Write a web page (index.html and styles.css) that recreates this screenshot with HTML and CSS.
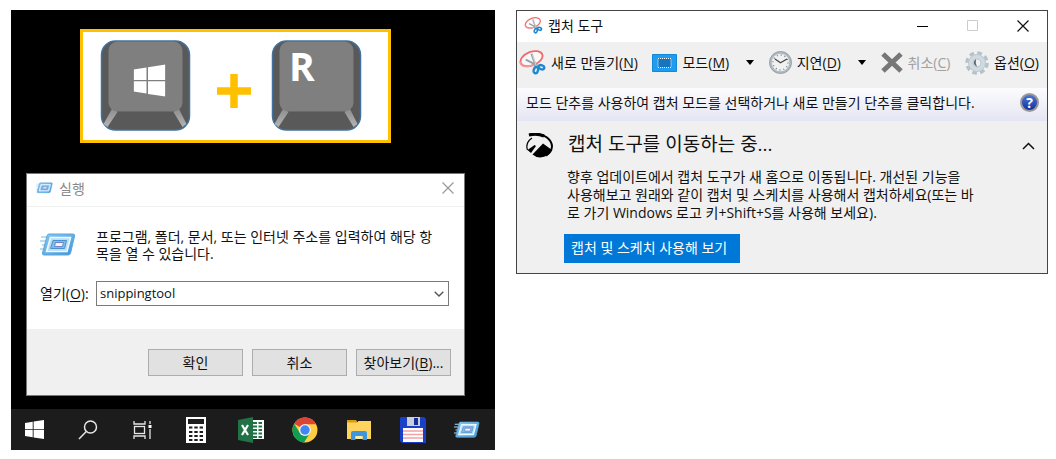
FILE: index.html
```html
<!doctype html>
<html lang="ko">
<head>
  <meta charset="utf-8">
  <meta name="viewport" content="width=device-width,initial-scale=1">
  <title>캡처 도구</title>
  <link rel="stylesheet" href="styles.css">
</head>
<body>
  <svg class="defs" width="0" height="0">
    <defs>
      <linearGradient id="run-blue" x1="0" y1="0" x2="1" y2="1">
        <stop offset="0" stop-color="#8cc8f0"/><stop offset="1" stop-color="#3b97dc"/>
      </linearGradient>
      <linearGradient id="edge" x1="0" y1="0" x2="0" y2="1">
        <stop offset="0" stop-color="#8c8c8c"/><stop offset="1" stop-color="#b4b4b4"/>
      </linearGradient>
      <symbol id="icon-run" viewBox="0 0 36 24">
        <path d="M1 4h8M0 8h8M2 12h6M0 16h6" stroke="#a5d3f2" stroke-width="1.4"/>
        <path d="M9 1h24q2 0 1.600 2l-4 17q-.5 2-2.500 2H4q-2 0-1.500-2L7 3q.5-2 2-2z" fill="url(#run-blue)" stroke="#5aa7dc"/>
        <path d="M10.500 4.500h20L27 18.500H6.500z" fill="#b9def6" stroke="#eef8ff" stroke-width="1.600"/>
        <path d="M13 7.500h13.500L24.500 15.500H10.500z" fill="#7fbcea" stroke="#4b93cf"/>
        <path d="M15.500 9.500h8l-1 4h-8z" fill="#eef3fc" stroke="#6a86c8"/>
      </symbol>
      <symbol id="icon-windows" viewBox="0 0 32 32">
        <path d="M0 5l13-2v12.500H0zM14.500 2.700L32 0v15.500H14.500zM0 16.700h13V29L0 27zM14.500 16.700H32V32l-17.500-2.600z" fill="#fff"/>
      </symbol>
      <symbol id="icon-snip" viewBox="0 0 28 26">
        <ellipse cx="13" cy="9" rx="12" ry="7" transform="rotate(-22 13 9)" fill="#fff" fill-opacity=".5" stroke="#ee6a6c" stroke-width="1.900"/>
        <path d="M1 12q1 6 8 5 5-.5 9-3" fill="none" stroke="#f29a9a" stroke-width="1.800"/>
        <path d="M13 4l5 14M7 10l14 7" stroke="#9aa1a6" stroke-width="2.200"/>
        <path d="M14 5l4 12" stroke="#e3e6e8" stroke-width=".8"/>
        <ellipse cx="17.500" cy="21" rx="2.200" ry="3.300" transform="rotate(15 17.500 21)" fill="none" stroke="#2089ce" stroke-width="2.500"/>
        <ellipse cx="23.300" cy="18" rx="3" ry="2.100" transform="rotate(20 23.300 18)" fill="none" stroke="#2089ce" stroke-width="2.500"/>
      </symbol>
    </defs>
  </svg>

  <main class="page">
    <section class="desktop">
      <div class="shortcut">
        <svg class="key" viewBox="0 0 90 91" role="img" aria-label="Windows">
          <rect x="1" y="1" width="88" height="89" rx="14" fill="#595959" stroke="#41719c" stroke-width="1.500"/>
          <path d="M12 68l5 4L7 87l-4-3zM78 68l-5 4 9 15 4-3z" fill="url(#edge)"/>
          <rect x="8" y="1.500" width="74" height="70" rx="9" fill="#7f7f7f"/>
          <svg x="33" y="24" width="32" height="33"><use href="#icon-windows"/></svg>
        </svg>
        <svg class="plus" viewBox="0 0 34 34" role="img" aria-label="plus">
          <path d="M17 0v34M0 17h34" stroke="#ffc000" stroke-width="7.500"/>
        </svg>
        <div class="key-letter">
          <svg class="key" viewBox="0 0 90 91">
            <rect x="1" y="1" width="88" height="89" rx="14" fill="#595959" stroke="#41719c" stroke-width="1.500"/>
            <path d="M12 68l5 4L7 87l-4-3zM78 68l-5 4 9 15 4-3z" fill="url(#edge)"/>
            <rect x="8" y="1.500" width="74" height="70" rx="9" fill="#7f7f7f"/>
          </svg>
          <span class="letter">R</span>
        </div>
      </div>

      <form class="run">
        <header class="run-title">
          <svg class="run-small"><use href="#icon-run"/></svg>
          <span>실행</span>
          <button type="button" class="icon-button" aria-label="닫기">
            <svg width="12" height="12" viewBox="0 0 12 12"><path d="M.5.5l11 11M11.500.5l-11 11" stroke="#999" stroke-width="1.200"/></svg>
          </button>
        </header>
        <div class="run-body">
          <div class="run-message">
            <svg class="run-large"><use href="#icon-run"/></svg>
            <p>프로그램, 폴더, 문서, 또는 인터넷 주소를 입력하여 해당 항<br>목을 열 수 있습니다.</p>
          </div>
          <div class="run-field">
            <label for="open">열기(<u>O</u>):</label>
            <div class="combo">
              <select id="open"><option>snippingtool</option></select>
              <svg class="combo-arrow" viewBox="0 0 10 6"><path d="M.7.7L5 5 9.300.7" fill="none" stroke="#555" stroke-width="1.400"/></svg>
            </div>
          </div>
        </div>
        <footer class="run-footer">
          <button type="button">확인</button>
          <button type="button">취소</button>
          <button type="button">찾아보기(<u>B</u>)...</button>
        </footer>
      </form>

      <nav class="taskbar">
        <button aria-label="시작"><svg width="19" height="19"><use href="#icon-windows"/></svg></button>
        <button aria-label="검색">
          <svg width="20" height="20" viewBox="0 0 20 20" fill="none" stroke="#e6e6e6" stroke-width="1.500"><circle cx="12.500" cy="7" r="6"/><path d="M8.300 11.500L1 19"/></svg>
        </button>
        <button aria-label="작업 보기">
          <svg width="19" height="18" viewBox="0 0 19 18" fill="none" stroke="#e6e6e6" stroke-width="1.300"><path d="M1 0v3h11V0M1 18v-3h11v3M17 0v3M17 8v10"/><rect x="1.500" y="5.500" width="10" height="7"/><path d="M15.500 4h3v3h-3z" fill="#fff" stroke="none"/></svg>
        </button>
        <button aria-label="계산기">
          <svg width="20" height="26" viewBox="0 0 20 26"><path fill="#fff" d="M0 0h20v26H0z"/><path fill="#1c1c1c" d="M2 2h16v5H2z"/><path d="M3 10.500h14M3 15h14M3 19h14M3 23h14" stroke="#1c1c1c" stroke-width="2.200" stroke-dasharray="3.400 1.900"/></svg>
        </button>
        <button aria-label="Excel">
          <svg width="26" height="26" viewBox="0 0 26 26"><path fill="#fff" d="M13 3h13v19H13z"/><path d="M15 6h4m1.500 0H24M15 9.500h4m1.500 0H24M15 13h4m1.500 0H24M15 16.500h4m1.500 0H24M15 20h4m1.500 0H24" stroke="#217346" stroke-width="2"/><path fill="#217346" d="M0 3l15-3v26L0 23z"/><path d="M4 8l6 10M10 8L4 18" stroke="#fff" stroke-width="2.200"/></svg>
        </button>
        <button aria-label="Chrome">
          <svg width="26" height="26" viewBox="0 0 26 26"><circle cx="13" cy="13" r="12.500" fill="#ffcd40"/><path d="M13 13L2.200 6.700A12.500 12.500 0 0 1 24 7.200H13z" fill="#db4437"/><path d="M2.200 6.700A12.500 12.500 0 0 0 12 25.500l6-9.500-5-3-5 3z" fill="#0f9d58"/><circle cx="13" cy="13" r="6" fill="#f1f1f1"/><circle cx="13" cy="13" r="4.700" fill="#4285f4"/></svg>
        </button>
        <button aria-label="파일 탐색기">
          <svg width="24" height="20" viewBox="0 0 24 20"><path d="M0 0h9l2 3H0z" fill="#dd9a0e"/><path d="M0 2.500h10l1.500-1.500H24v18H0z" fill="#ffd45e"/><path d="M4 20v-7q0-2 2-2h12q2 0 2 2v7h-4.500v-4h-7v4z" fill="#3a96dd"/><path d="M8.500 16h7v3h-7z" fill="#ffe9a8"/></svg>
        </button>
        <button aria-label="저장">
          <svg width="26" height="26" viewBox="0 0 26 26"><path d="M1 0h23l2 2v24H2l-2-2V1z" fill="#1a3fc8"/><path d="M7 0h13v9H7z" fill="#c9ced8"/><path d="M14 1h4v7h-4z" fill="#142f9c"/><path d="M3 11h20v14H3z" fill="#fff"/><path d="M3 14h20M3 17.500h20M3 21h20" stroke="#f2a1a6" stroke-width="1.300"/></svg>
        </button>
        <button aria-label="실행"><svg width="26" height="18"><use href="#icon-run"/></svg></button>
      </nav>
    </section>

    <section class="snip">
      <header class="snip-title">
        <svg width="19" height="17"><use href="#icon-snip"/></svg>
        <h1>캡처 도구</h1>
        <div class="window-buttons">
          <button aria-label="최소화"><svg width="12" height="12"><path d="M0 6.500h11" stroke="#000"/></svg></button>
          <button aria-label="최대화" disabled><svg width="12" height="12"><path d="M.5.5h10v10H.5z" fill="none" stroke="#ccc"/></svg></button>
          <button aria-label="닫기"><svg width="12" height="12"><path d="M.5.5l11 11M11.500.5l-11 11" stroke="#111" stroke-width="1.200"/></svg></button>
        </div>
      </header>

      <div class="toolbar">
        <button>
          <svg width="27" height="25"><use href="#icon-snip"/></svg>
          <span>새로 만들기(<u>N</u>)</span>
        </button>
        <button>
          <svg width="25" height="18" viewBox="0 0 25 18"><path d="M.5.500h24v17H.5z" fill="#1c9df0" stroke="#1687d3"/><path d="M6 4.500h13v9H6z" fill="#1576bf" stroke="#fff" stroke-dasharray="1 1"/></svg>
          <span>모드(<u>M</u>)</span>
          <svg class="caret" width="8" height="5"><path d="M0 0h8L4 5z"/></svg>
        </button>
        <button>
          <svg width="23" height="23" viewBox="0 0 23 23"><circle cx="11.500" cy="11.500" r="10" fill="#f0f1f1" stroke="#b0bac1" stroke-width="2.500"/><circle cx="11.500" cy="11.500" r="11" fill="none" stroke="#8c979e" stroke-width=".7"/><circle cx="11.500" cy="11.500" r="7.500" fill="none" stroke="#777" stroke-width="1.300" stroke-dasharray="1 2.927"/><path d="M6 8l5.500 3.700L18 8" fill="none" stroke="#444" stroke-width="1.300"/></svg>
          <span>지연(<u>D</u>)</span>
          <svg class="caret" width="8" height="5"><path d="M0 0h8L4 5z"/></svg>
        </button>
        <button disabled>
          <svg width="22" height="21" viewBox="0 0 22 21"><path d="M2 2l18 17M20 2L2 19" stroke="#777" stroke-width="5"/></svg>
          <span>취소(<u>C</u>)</span>
        </button>
        <button>
          <svg width="24" height="26" viewBox="0 0 24 26"><circle cx="12" cy="13" r="10" fill="none" stroke="#b5c2ca" stroke-width="3.500" stroke-dasharray="4.600 3.254"/><circle cx="12" cy="13" r="8.500" fill="#d0dae0" stroke="#bcc8cf"/><circle cx="12" cy="13" r="4" fill="#edf1f3" stroke="#bdc8ce"/><path d="M11 9q-5 4 1 8-2-4-1-8z" fill="#59656d"/></svg>
          <span>옵션(<u>O</u>)</span>
        </button>
      </div>

      <div class="hint">
        <p>모드 단추를 사용하여 캡처 모드를 선택하거나 새로 만들기 단추를 클릭합니다.</p>
        <button class="help" aria-label="도움말">?</button>
      </div>

      <article class="notice">
        <svg class="notice-icon" width="27" height="25" viewBox="0 0 27 25">
          <path d="M3 2Q14-1 21 4.500q5 4 5 9-.5 6-6 9" fill="none" stroke="#000" stroke-width="2"/>
          <path d="M3 2q8-2 15 1" fill="none" stroke="#000" stroke-width="3"/>
          <path d="M6 5Q-1 10 1.500 17" fill="none" stroke="#000" stroke-width="1.200"/>
          <path d="M1.500 17l7-5 1.500 1-5 7zM6.500 21.500L17 10.500l9 6.500Q23 24 14 24.500q-4 0-7.500-3z"/>
        </svg>
        <div class="notice-text">
          <h2>캡처 도구를 이동하는 중...</h2>
          <p>향후 업데이트에서 캡처 도구가 새 홈으로 이동됩니다. 개선된 기능을<br>사용해보고 원래와 같이 캡처 및 스케치를 사용해서 캡처하세요(또는 바<br>로 가기 Windows 로고 키+Shift+S를 사용해 보세요).</p>
          <button class="try">캡처 및 스케치 사용해 보기</button>
        </div>
        <button class="icon-button" aria-label="접기">
          <svg width="13" height="8" viewBox="0 0 13 8"><path d="M1 7l5.500-5.500L12 7" fill="none" stroke="#111" stroke-width="1.500"/></svg>
        </button>
      </article>
    </section>
  </main>
</body>
</html>
```
FILE: styles.css
```css
* {
  box-sizing: border-box;
}

body {
  margin: 0;
  background: #fff;
  color: #111;
  font: 14px/17px "Open Sans", "Noto Sans CJK KR", sans-serif;
}

h1, h2, p {
  margin: 0;
  font-weight: normal;
}

svg {
  display: block;
  flex: none;
}

.defs {
  position: absolute;
}

button {
  padding: 0;
  border: 0;
  background: none;
  color: inherit;
  font: inherit;
  white-space: nowrap;
}

u {
  text-underline-offset: 2px;
}

.page {
  display: grid;
  grid-template-columns: 484fr 532fr;
  align-items: start;
  gap: 21px;
  padding: 10px 8px 8px 11px;
}

/* desktop with the run dialog */
.desktop {
  background: #000;
}

.shortcut {
  display: flex;
  justify-content: space-between;
  align-items: center;
  margin: 19px 104px 30px 69px;
  padding: 8px 26px 9px 17px;
  border: 3px solid #ffc000;
  background: #fff;
}

.key {
  width: 91px;
  height: 91px;
}

.plus {
  width: 34px;
  height: 34px;
  margin: 10px 0 0 6px;
}

.key-letter {
  position: relative;
}

.letter {
  position: absolute;
  top: 6px;
  left: 18px;
  color: #fff;
  font-size: 39px;
  line-height: 40px;
  font-weight: bold;
}

.run {
  margin: 0 30px 0 15px;
  border: 1px solid #777;
  background: #fff;
}

.run-title {
  display: flex;
  align-items: center;
  gap: 6px;
  height: 33px;
  padding: 0 10px 4px 9px;
  border-bottom: 1px solid #f0f0f0;
  color: #888;
}

.run-small {
  width: 17px;
  height: 12px;
}

.icon-button {
  margin-left: auto;
}

.run-body {
  padding: 21px 15px 23px 13px;
}

.run-message {
  display: flex;
  align-items: center;
  gap: 20px;
  margin-bottom: 19px;
  white-space: nowrap;
}

.run-large {
  width: 36px;
  height: 26px;
}

.run-field {
  display: flex;
  align-items: center;
}

.run-field label {
  width: 56px;
}

.combo {
  position: relative;
  flex: 1;
}

.combo select {
  display: block;
  width: 100%;
  height: 25px;
  padding: 0 3px;
  border: 1px solid #7a7a7a;
  border-radius: 0;
  background: #fff;
  color: #111;
  font: inherit;
  font-size: 13px;
  line-height: 21px;
  appearance: none;
}

.combo-arrow {
  position: absolute;
  top: 10px;
  right: 5px;
  width: 10px;
  height: 6px;
  pointer-events: none;
}

.run-footer {
  display: flex;
  justify-content: flex-end;
  gap: 9px;
  padding: 20px 13px 19px;
  background: #f0f0f0;
}

.run-footer button {
  width: 95px;
  height: 27px;
  border: 1px solid #adadad;
  background: #e1e1e1;
}

.taskbar {
  display: flex;
  justify-content: space-between;
  align-items: center;
  height: 41px;
  margin-top: 13px;
  padding: 0 14px 0 9px;
  background: #1c1c1c;
}

.taskbar button {
  display: flex;
  justify-content: center;
  width: 28px;
}

/* snipping tool window */
.snip {
  border: 1px solid #444;
  background: #f0f0f0;
}

.snip-title {
  display: flex;
  align-items: center;
  gap: 5px;
  height: 31px;
  padding: 0 18px 2px 7px;
  background: #fff;
}

.snip-title h1 {
  font-size: 14px;
}

.window-buttons {
  display: flex;
  gap: 38px;
  margin-left: auto;
}

.toolbar {
  display: flex;
  justify-content: space-between;
  align-items: center;
  height: 46px;
  padding: 0 8px 5px 2px;
}

.toolbar button {
  display: flex;
  align-items: center;
  gap: 5px;
}

.toolbar button:disabled {
  color: #a0a0a0;
}

.toolbar .caret {
  margin-left: 12px;
}

.hint {
  display: flex;
  justify-content: space-between;
  align-items: center;
  height: 33px;
  padding: 0 8px 4px 9px;
  background: linear-gradient(#fcfcfe, #e4e5f2);
  white-space: nowrap;
}

.help {
  width: 19px;
  height: 19px;
  border: 2px solid #999;
  border-radius: 50%;
  background: linear-gradient(#4d76d4, #15319c);
  color: #fff;
  font-size: 14px;
  line-height: 15px;
  font-weight: bold;
}

.notice {
  display: flex;
  align-items: flex-start;
  padding: 12px 12px 10px 9px;
}

.notice-text {
  margin-left: 11px;
  white-space: nowrap;
}

.notice h2 {
  margin: 0 0 13px 4px;
  font-size: 19px;
  line-height: 22px;
}

.notice p {
  margin: 0 0 12px 3px;
  line-height: 18px;
}

.notice .icon-button {
  padding-top: 9px;
}

.try {
  height: 29px;
  padding: 0 13px 2px 7px;
  background: #0078d7;
  color: #fff;
}
```
